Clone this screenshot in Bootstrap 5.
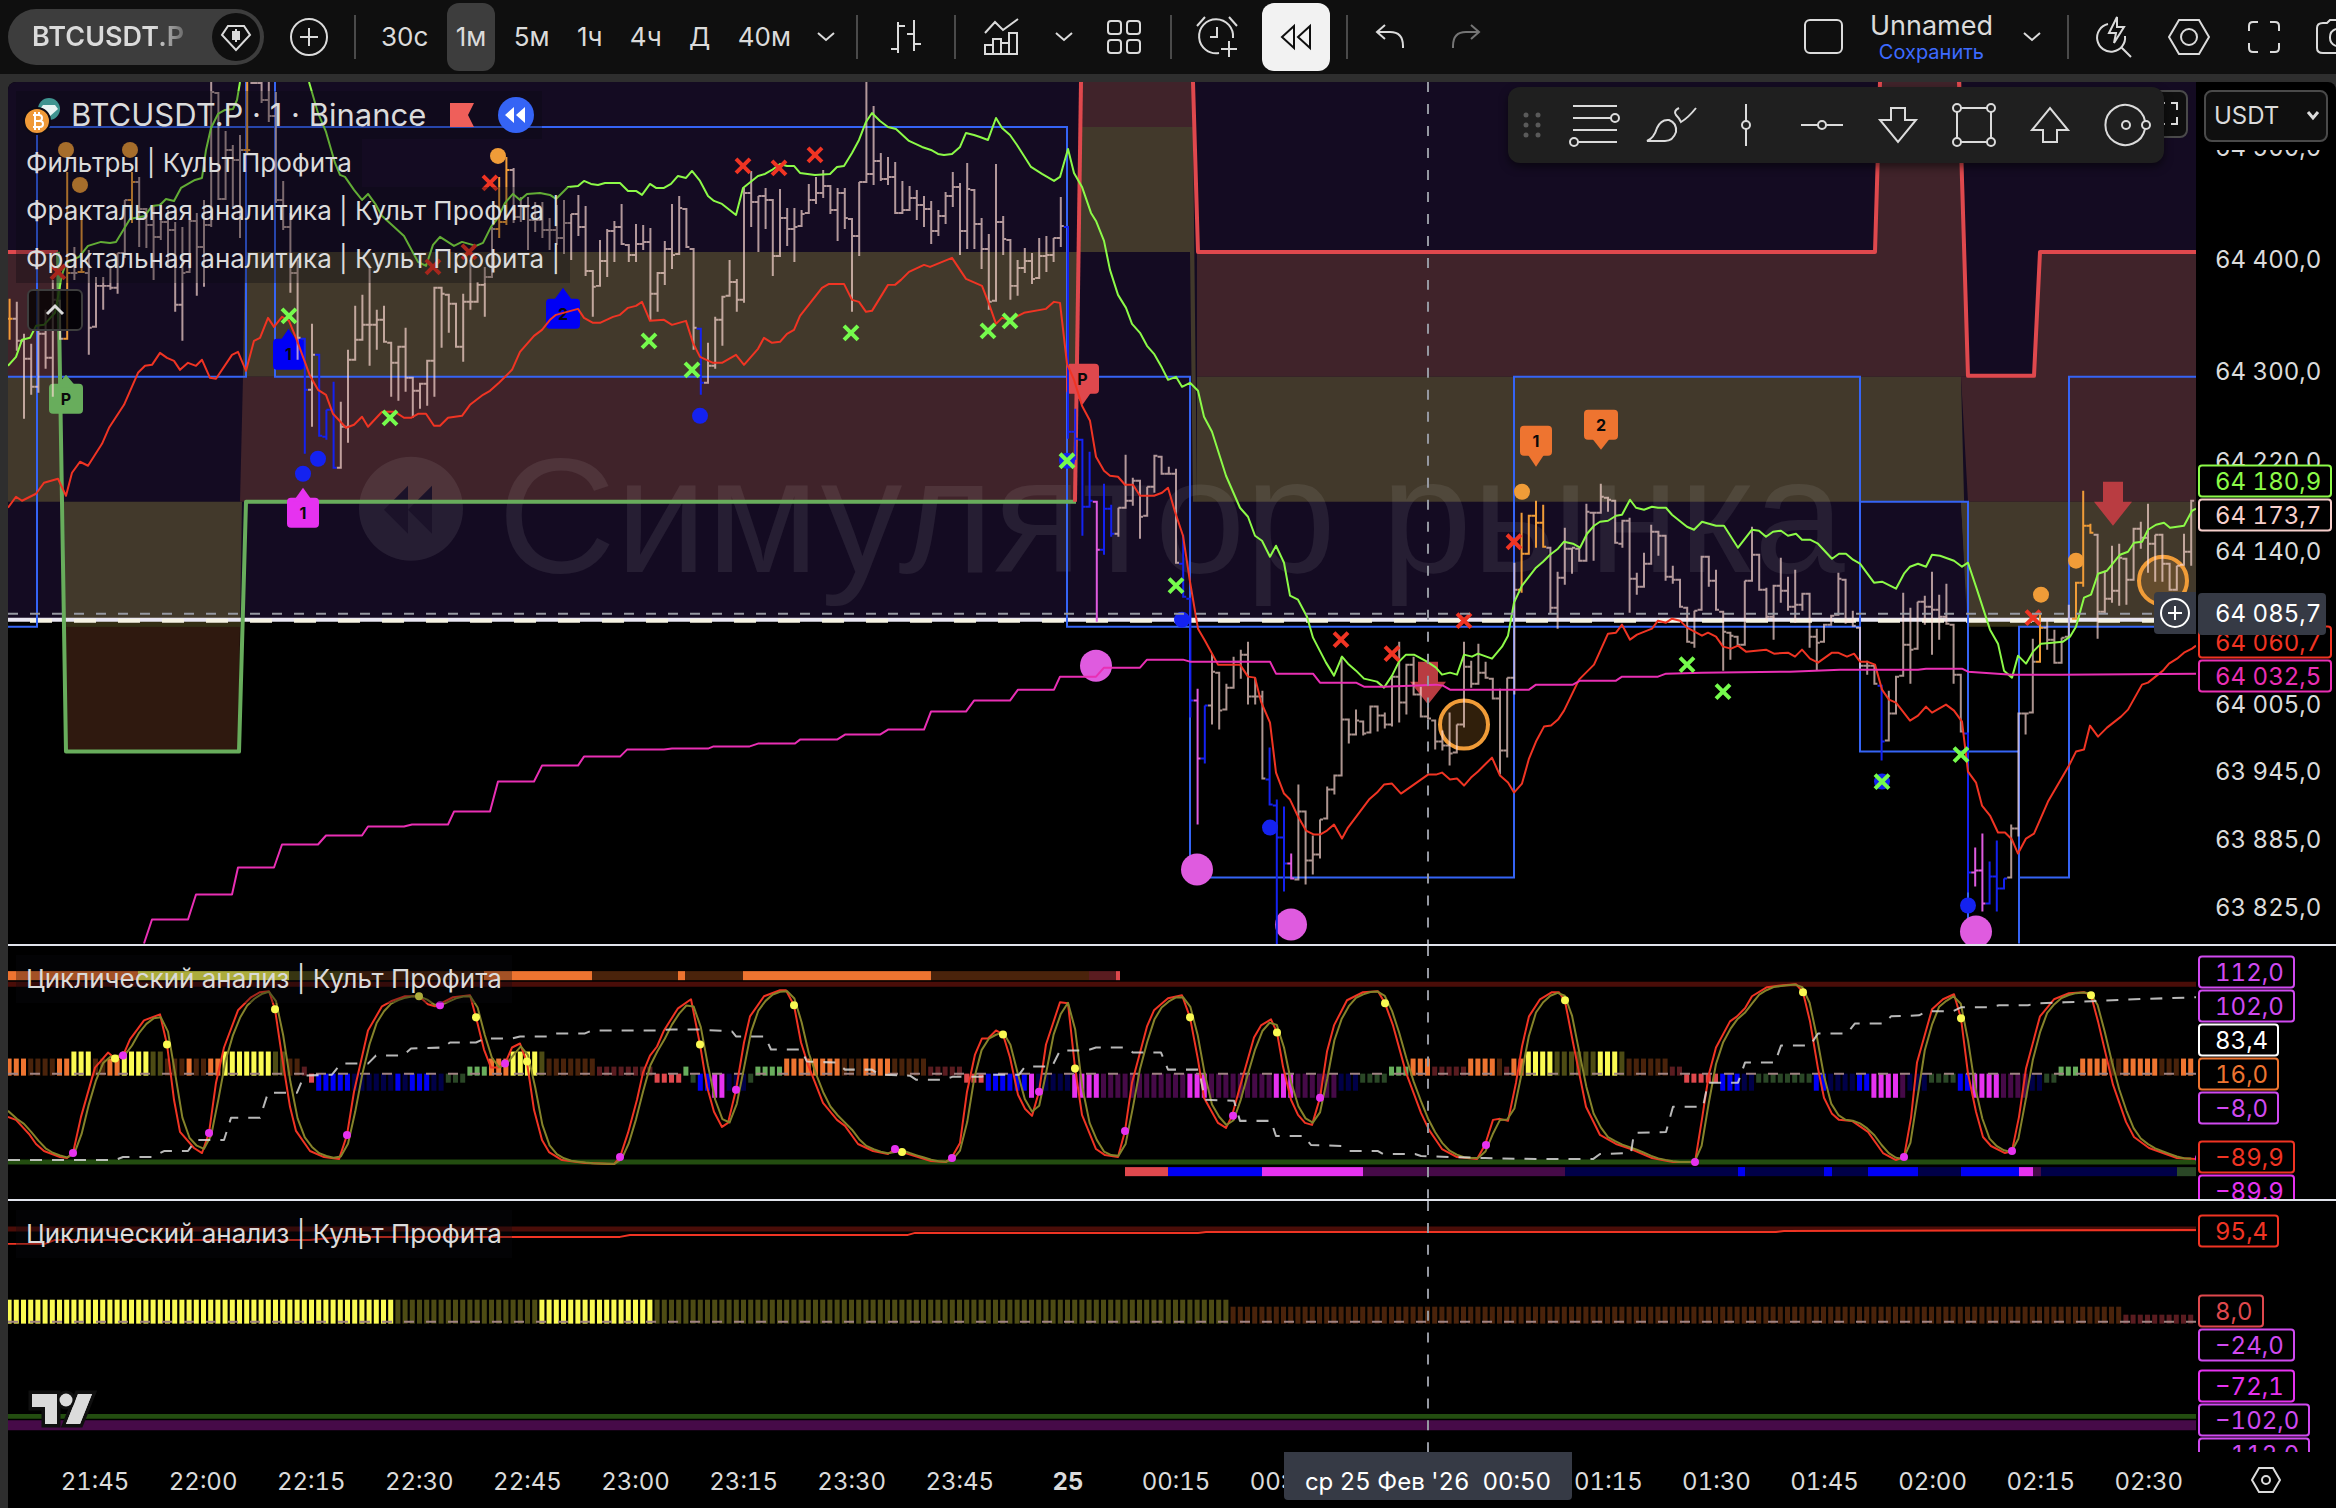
<!DOCTYPE html>
<html lang="ru" data-bs-theme="dark">
<head>
<meta charset="utf-8">
<meta name="viewport" content="width=device-width, initial-scale=1">
<title>BTCUSDT.P · 1 · Binance</title>
<link rel="stylesheet" href="https://cdn.jsdelivr.net/npm/bootstrap@5.3.0/dist/css/bootstrap.min.css">
<style>
body{font-family:Inter,"Noto Sans","Liberation Sans",sans-serif;background:#2e2e2e;color:#dbdbdb;font-size:24px;line-height:32px}
svg{display:block;flex:none}
.topbar{height:74px;background:#0f0f0f;padding-left:8px}
.ico{fill:none;stroke:#dbdbdb;stroke-width:2;overflow:visible}
.tbtn{border:0;background:transparent;color:#dbdbdb;height:68px;padding:0;display:flex;align-items:center;justify-content:center;border-radius:12px;flex:none}
.tbtn.on{background:#3d3d3d}
.tbtn.lit{background:#f2f2f2}
.tbtn.lit .ico{stroke:#0f0f0f}
.w36{width:36px}.w46{width:46px}.w52{width:52px}.w60{width:60px}.w68{width:68px}.w76{width:76px}.w84{width:84px}.w90{width:90px}.w96{width:96px}
.pill{width:256px;height:56px;background:#3d3d3d;border-radius:28px;padding:0 4px 0 24px;flex:none}
.pill-name{font-size:27px;background:linear-gradient(90deg,#dbdbdb 80%,#6a6a6a 100%);-webkit-background-clip:text;background-clip:text;color:transparent;border:0;padding:0}
.pill-badge{width:48px;height:48px;background:#0f0f0f}
.vsep{width:2px;height:44px;background:#4a4a4a;flex:none}
.frames{width:428px;font-size:26px}
.frames .tbtn{padding:0 9px}
.layout-name{font-size:27px;line-height:30px}
.layout-save{font-size:20px;line-height:22px;color:#3d6bff;text-decoration:none}
.workspace{padding:8px 0 0 8px;min-height:0}
.board{background:#000;border-radius:8px 8px 0 0;overflow:hidden}
.pane{border-bottom:2px solid #e0e3eb;min-height:0;flex:1 1 0}
.pane-main{flex-grow:865}.pane-osc{flex-grow:253}.pane-slow{flex-grow:252;border-bottom:0}
.plot{min-width:0;overflow:hidden}
.plot>svg{width:100%;height:100%;position:absolute;inset:0}
.scale{width:140px;overflow:hidden;flex:none}
.tag{position:absolute;left:2px;height:33px;line-height:29px;padding:0 9px 0 15px;border:2px solid transparent;border-radius:4px;transform:translateY(-50%);background:#000;white-space:nowrap;font-variant-numeric:tabular-nums}
.tag-plain{background:transparent}
.tag-cross{width:128px;height:42px;line-height:38px;background:#363a45;color:#fff}
.plus-tag{position:absolute;right:0;width:42px;height:42px;background:#363a45;border:0;border-radius:4px 0 0 4px;transform:translateY(-50%);padding:0}
.legend-box{position:absolute;left:8px;top:9px;font-size:26px}
.legend-box>div{height:48px;padding:0 10px;width:max-content;background:rgba(10,10,14,.32);display:flex;align-items:center;white-space:nowrap}
.legend-box .sym{font-size:31px;padding:0 8px 0 7px}
.fold{width:56px;height:42px;background:rgba(0,0,0,.75);border:2px solid #3d3d3d;border-radius:6px;margin:6px 0 0 11px;padding:0}
.tools{position:absolute;right:32px;top:5px;height:76px;width:656px;background:#1f1f1f;border-radius:12px;box-shadow:0 4px 8px rgba(0,0,0,.5);padding-left:12px}
.expand{position:absolute;right:8px;top:8px;width:60px;height:48px;background:#0f0f0f;border:2px solid #4a4a4a;border-radius:8px;padding:0 8px 0 0}
.money{position:absolute;left:8px;top:8px;width:124px;height:52px;z-index:2;background:#0f0f0f;box-shadow:0 0 0 8px #000;border-radius:8px}
.money select{appearance:none;width:100%;height:100%;background:transparent;border:2px solid #4a4a4a;border-radius:8px;color:#dbdbdb;font-size:24px;padding:0 8px}
.money svg{position:absolute;right:8px;top:20px;pointer-events:none}
.timebar{height:56px;flex:none;font-variant-numeric:tabular-nums}
.ticks{margin:0 -7px 0 33px}
.ticks span{flex:1 1 0;text-align:center;line-height:60px;min-width:0}
.cross-date{position:absolute;top:0;left:64.9%;transform:translateX(-50%);background:#363a45;color:#fff;width:288px;height:48px;line-height:60px;text-align:center;white-space:pre;border-radius:0 0 4px 4px;margin:0}
.mk{font:700 16px Inter,"Noto Sans",sans-serif;text-anchor:middle;fill:#0a0a0a}
.wm{font:400 163px "Liberation Sans",sans-serif;fill:#fff;fill-opacity:.08}
.tvlogo{position:absolute;left:20px;bottom:22px;width:70px;height:42px}
</style>
<script src="https://cdn.jsdelivr.net/npm/bootstrap@5.3.0/dist/js/bootstrap.bundle.min.js"></script>
</head>
<body class="vh-100 d-flex flex-column overflow-hidden m-0">
<header class="topbar d-flex align-items-center overflow-hidden">
  <div class="pill d-flex align-items-center justify-content-between">
    <button class="pill-name fw-semibold" type="button">BTCUSDT.P</button>
    <button class="pill-badge rounded-circle border-0 p-0 d-flex align-items-center justify-content-center" type="button" aria-label="Инструмент"><svg class="ico" width="34" height="34"><path d="M9 6H25L31 15L17 30L3 15Z M17 9V22"/><path fill="#dbdbdb" d="M14 12h6v7h-6z"/></svg></button>
  </div>
  <button class="tbtn w90" type="button" aria-label="Добавить"><svg class="ico" width="38" height="38"><circle cx="19" cy="19" r="18"/><path d="M19 10V28M10 19H28"/></svg></button>
  <span class="vsep me-3"></span>
  <div class="frames d-flex justify-content-between">
    <button class="tbtn" type="button">30с</button><button class="tbtn on" type="button">1м</button><button class="tbtn" type="button">5м</button><button class="tbtn" type="button">1ч</button><button class="tbtn" type="button">4ч</button><button class="tbtn" type="button">Д</button><button class="tbtn" type="button">40м</button>
  </div>
  <button class="tbtn w52" type="button" aria-label="Интервалы"><svg class="ico" width="18" height="10"><path d="M1 1L9 8L17 1"/></svg></button>
  <span class="vsep ms-1"></span>
  <button class="tbtn w96" type="button" aria-label="Тип графика"><svg class="ico" width="32" height="36"><path d="M8 3V34M8 7H15M1 30H8M24 1V32M17 15H24M24 25H31"/></svg></button>
  <span class="vsep"></span>
  <button class="tbtn w90" type="button" aria-label="Индикаторы"><svg class="ico" width="36" height="38"><path d="M2 15L12 4L20 12L35 1M2 36V27H10V36ZM10 36V21H18V36ZM18 36V25H26V36ZM26 36V15H34V36Z"/></svg></button>
  <button class="tbtn w36" type="button" aria-label="Избранные индикаторы"><svg class="ico" width="18" height="10"><path d="M1 1L9 8L17 1"/></svg></button>
  <button class="tbtn w84" type="button" aria-label="Шаблоны"><svg class="ico" width="34" height="34"><rect x="1" y="1" width="13" height="13" rx="3"/><rect x="20" y="1" width="13" height="13" rx="3"/><rect x="1" y="20" width="13" height="13" rx="3"/><rect x="20" y="20" width="13" height="13" rx="3"/></svg></button>
  <span class="vsep ms-1"></span>
  <button class="tbtn w90" type="button" aria-label="Оповещение"><svg class="ico" width="42" height="42"><path d="M23 37A17 17 0 1 1 37 22M21 11V21H14M1 10L9 1M33 1L41 10M33 25V41M25 33H41"/></svg></button>
  <button class="tbtn w68 lit" type="button" aria-label="Симулятор"><svg class="ico" width="34" height="28"><path d="M15 3V25L3 14ZM31 3V25L19 14Z"/></svg></button>
  <span class="vsep ms-3 me-1"></span>
  <button class="tbtn w76" type="button" aria-label="Отменить"><svg class="ico" width="30" height="26"><path d="M10 1L2 8L10 15M2 8H15Q28 8 28 22V24"/></svg></button>
  <button class="tbtn w76" type="button" aria-label="Вернуть"><svg class="ico" width="30" height="26" opacity=".5"><path d="M20 1L28 8L20 15M28 8H15Q2 8 2 22V24"/></svg></button>
  <div class="ms-auto d-flex align-items-center flex-shrink-0">
    <button class="tbtn w60" type="button" aria-label="Макет"><svg class="ico" width="40" height="36"><rect x="1" y="1" width="37" height="33" rx="5"/></svg></button>
    <div class="d-flex flex-column align-items-center px-3"><span class="layout-name">Unnamed</span><a class="layout-save" href="#">Сохранить</a></div>
    <button class="tbtn w46 me-1" type="button" aria-label="Макеты"><svg class="ico" width="18" height="10"><path d="M1 1L9 8L17 1"/></svg></button>
    <span class="vsep ms-2"></span>
    <button class="tbtn w90" type="button" aria-label="Быстрый поиск"><svg class="ico" width="38" height="42"><path d="M13 8A14 14 0 1 0 30 20M26 31L36 41M22 1L14 17H21L19 27L29 11H22Z"/></svg></button>
    <button class="tbtn w60" type="button" aria-label="Настройки"><svg class="ico" width="42" height="38"><path d="M11 2H31L41 19L31 36H11L1 19Z"/><circle cx="21" cy="19" r="8"/></svg></button>
    <button class="tbtn w90" type="button" aria-label="Полный экран"><svg class="ico" width="32" height="32"><path d="M1 10V5Q1 1 5 1H10M22 1H27Q31 1 31 5V10M31 22V27Q31 31 27 31H22M10 31H5Q1 31 1 27V22"/></svg></button>
    <button class="tbtn" type="button" aria-label="Снимок"><svg class="ico" width="27" height="38"><path d="M27 35H14Q8 35 8 30V10Q8 5 14 5H18L21 2H27"/><path d="M27 11A9 9 0 0 0 27 28"/></svg></button>
  </div>
</header>

<main class="workspace flex-grow-1 d-flex flex-column">
<div class="board flex-grow-1 d-flex flex-column">
  <section class="pane pane-main d-flex">
    <div class="plot position-relative flex-grow-1">
      <svg id="main" viewBox="8 82 2188 863" preserveAspectRatio="none"></svg>
      <div class="legend-box">
        <div class="sym"><svg width="40" height="40"><circle cx="26" cy="14" r="11" fill="#3f9490"/><path d="M20 10h12l3 4l-9 8l-9-8z" fill="#e8f4f3"/><circle cx="14" cy="26" r="13" fill="#f09a38" stroke="#0d0a16" stroke-width="2"/><path d="M10 20h6a3 3 0 0 1 0 6h-5h6a3 3 0 0 1 0 6h-7M12 20v12M12 17v3M16 17v3M12 32v3M16 32v3" fill="none" stroke="#fff" stroke-width="2"/></svg><span class="ms-2">BTCUSDT.P · 1 · Binance</span><svg class="ms-4" width="24" height="26"><path d="M0 1H24L18 13L24 25H0Z" fill="#ef5f5a"/></svg><svg class="ms-4" width="36" height="36"><circle cx="18" cy="18" r="18" fill="#3564f5"/><path d="M16 10V26L7 18ZM27 10V26L18 18Z" fill="#fff"/></svg></div>
        <div>Фильтры | Культ Профита</div>
        <div>Фрактальная аналитика | Культ Профита |</div>
        <div>Фрактальная аналитика | Культ Профита |</div>
        <button class="fold d-flex align-items-center justify-content-center" type="button" aria-label="Свернуть"><svg class="ico" width="18" height="12"><path stroke-width="3" d="M1 10L9 2L17 10"/></svg></button>
      </div>
      <button class="expand d-flex align-items-center justify-content-end" type="button" aria-label="Развернуть"><svg class="ico" width="20" height="24"><path d="M1 7V1H7M13 1H19V8M19 15V22H13M1 16V22H7"/></svg></button>
      <div class="tools d-flex align-items-center">
        <svg width="28" height="26" fill="#5a5a5a"><circle cx="6" cy="3" r="2.5"/><circle cx="18" cy="3" r="2.5"/><circle cx="6" cy="13" r="2.5"/><circle cx="18" cy="13" r="2.5"/><circle cx="6" cy="23" r="2.5"/><circle cx="18" cy="23" r="2.5"/></svg>
        <button class="tbtn w76 ms-2" type="button" aria-label="Фибоначчи"><svg class="ico" width="54" height="44"><path d="M6 3H50M6 15H44M6 27H50M11 39H50"/><circle cx="48" cy="15" r="4"/><circle cx="7" cy="39" r="4"/></svg></button>
        <button class="tbtn w76" type="button" aria-label="Кисть"><svg class="ico" width="50" height="38"><path d="M2 35Q9 32 12 22Q16 13 24 14Q32 17 31 26Q28 35 20 35ZM34 2Q28 5 31 9Q34 12 36 16Q43 12 51 2"/></svg></button>
        <button class="tbtn w76" type="button" aria-label="Вертикальная линия"><svg class="ico" width="12" height="42"><path d="M6 0V17M6 25V42"/><circle cx="6" cy="21" r="4"/></svg></button>
        <button class="tbtn w76" type="button" aria-label="Горизонтальная линия"><svg class="ico" width="42" height="12"><path d="M0 6H17M25 6H42"/><circle cx="21" cy="6" r="4"/></svg></button>
        <button class="tbtn w76" type="button" aria-label="Стрелка вниз"><svg class="ico" width="40" height="38"><path d="M13 2H27V14H38L20 36L2 14H13Z"/></svg></button>
        <button class="tbtn w76" type="button" aria-label="Прямоугольник"><svg class="ico" width="46" height="44"><path d="M10 5H36M10 39H36M6 9V35M40 9V35"/><circle cx="6" cy="5" r="4"/><circle cx="40" cy="5" r="4"/><circle cx="6" cy="39" r="4"/><circle cx="40" cy="39" r="4"/></svg></button>
        <button class="tbtn w76" type="button" aria-label="Стрелка вверх"><svg class="ico" width="40" height="38"><path d="M13 36H27V24H38L20 2L2 24H13Z"/></svg></button>
        <button class="tbtn w76" type="button" aria-label="Окружность"><svg class="ico" width="44" height="44"><path d="M41 18A20 20 0 1 0 41 26"/><circle cx="22" cy="22" r="4"/><circle cx="42" cy="22" r="4"/></svg></button>
      </div>
      <button class="plus-tag d-flex align-items-center justify-content-center" style="top:61.6%" type="button" aria-label="Действия на цене"><svg class="ico" width="30" height="30" style="stroke:#fff"><circle cx="15" cy="15" r="14"/><path d="M15 8V22M8 15H22"/></svg></button>
    </div>
    <div class="scale position-relative" id="scale1"><label class="money" aria-label="Валюта"><select><option>USDT</option></select><svg class="ico" width="14" height="12"><path stroke-width="3" d="M2 2L7 8L12 2"/></svg></label></div>
  </section>
  <section class="pane pane-osc d-flex">
    <div class="plot position-relative flex-grow-1"><svg id="osc" viewBox="8 947 2188 251" preserveAspectRatio="none"></svg>
      <div class="legend-box"><div>Циклический анализ | Культ Профита</div></div></div>
    <div class="scale position-relative" id="scale2"></div>
  </section>
  <section class="pane pane-slow d-flex">
    <div class="plot position-relative flex-grow-1"><svg id="slow" viewBox="8 1200 2188 252" preserveAspectRatio="none"></svg>
      <div class="legend-box"><div>Циклический анализ | Культ Профита</div></div>
      <div class="tvlogo"><svg width="70" height="42"><path d="M4 6H29V36H17V19H4ZM50 6H64L52 36H38Z" fill="#dbdbdb" stroke="#0f0f0f" stroke-width="7" paint-order="stroke"/><circle cx="38" cy="12" r="6.500" fill="#dbdbdb" stroke="#0f0f0f" stroke-width="6" paint-order="stroke"/><path d="M4 6H29V36H17V19H4ZM50 6H64L52 36H38Z" fill="#dbdbdb"/></svg></div>
    </div>
    <div class="scale position-relative" id="scale3"></div>
  </section>
  <section class="timebar d-flex">
    <div class="position-relative flex-grow-1">
      <div class="ticks d-flex"><span>21:45</span><span>22:00</span><span>22:15</span><span>22:30</span><span>22:45</span><span>23:00</span><span>23:15</span><span>23:30</span><span>23:45</span><span class="fw-bold">25</span><span>00:15</span><span>00:30</span><span>00:45</span><span>01:00</span><span>01:15</span><span>01:30</span><span>01:45</span><span>02:00</span><span>02:15</span><span>02:30</span></div>
      <p class="cross-date">ср 25 Фев '26  00:50</p>
    </div>
    <button class="tbtn scale h-100" type="button" aria-label="Настройки шкалы"><svg class="ico" width="30" height="28"><path d="M8 2H22L29 14L22 26H8L1 14Z"/><circle cx="15" cy="14" r="4"/></svg></button>
  </section>
</div>
</main>

<script>
const NS = 'http://www.w3.org/2000/svg';
const X0 = 1428, STEP = 7.2, FIRST = -197;
const bx = i => X0 + STEP * i;
function el(host, name, attrs, text) {
  const e = document.createElementNS(NS, name);
  for (const k in attrs) e.setAttribute(k, attrs[k]);
  if (text) e.textContent = text;
  host.appendChild(e);
  return e;
}
const parse = s => s.trim().split(/\s+/).map(p => p.split(',').map(Number));
const line = (host, pts, color, w, extra) =>
  el(host, 'polyline', Object.assign({ points: pts.map(p => p.join(',')).join(' '), fill: 'none', stroke: color, 'stroke-width': w, 'stroke-linejoin': 'round' }, extra));
const poly = (host, pts, color) => el(host, 'polygon', { points: pts, fill: color });
const path = (host, d, color, w, extra) => el(host, 'path', Object.assign({ d, fill: 'none', stroke: color, 'stroke-width': w }, extra));
const dot = (host, x, y, r, color) => el(host, 'circle', { cx: x, cy: y, r, fill: color });

/* ---------- price pane ---------- */
const main = document.getElementById('main');
const PUR = '#140b22', OLV = '#42392b', MAR = '#40232a', BRN = '#2f190f';
poly(main, '8,82 2196,82 2196,621 8,621', PUR);
poly(main, '8,252 59,252 61,377 8,377', MAR);
poly(main, '8,377 61,377 63,502 8,502', OLV);
poly(main, '64,502 242,502 240,627 65,627', OLV);
poly(main, '65,627 240,627 238,752 66,752', BRN);
poly(main, '245,252 1077,252 1077,377 243,377', OLV);
poly(main, '243,377 1077,377 1075,502 246,502 240,502', MAR);
poly(main, '1081,82 1193,82 1193,127 1081,127', MAR);
poly(main, '1081,127 1193,127 1197,502 1193,502 1190,252 1079,252', OLV);
poly(main, '1197,252 1875,252 1881,82 1962,82 1968,377 1197,377', MAR);
poly(main, '1197,377 1961,377 1967,620 1961,502 1197,502', OLV);
poly(main, '1961,377 2034,377 2040,252 2196,252 2196,502 1968,502', MAR);
poly(main, '1961,502 2196,502 2196,621 1968,621', OLV);
poly(main, '65,621 240,621 240,627 65,627', '#332e14');
poly(main, '1968,621 2196,621 2196,627 1968,627', '#332e14');

el(main, 'circle', { cx: 411, cy: 509, r: 52, fill: '#fff', 'fill-opacity': .08 });
poly(main, '408,486 408,534 384,510', '#1b1229');
poly(main, '432,486 432,534 408,510', '#1b1229');
el(main, 'text', { x: 498, y: 572, class: 'wm' }, 'Симулятор рынка');

path(main, 'M8 620H2196', '#e9e6f2', 4);
path(main, 'M30 621H2196', '#f5f2e2', 4, { 'stroke-dasharray': '22 22' });
path(main, 'M8 627H37V127H1067V627H1860M8 377H246V82M275 82V377H1190V878H1514V377H1860V752H2019M1860 502H1968V944M2019 944V627H2196M2019 878H2069V377H2196', '#3564f5', 2);

line(main, parse('8,252 58,252'), '#df484d', 4);
line(main, parse('58,252 66,752 239,752 246,502 1076,502'), '#68ad5c', 4);
line(main, parse('1075,502 1081,82'), '#df484d', 4);
line(main, parse('1193,82 1198,252 1875,252 1880,82'), '#df484d', 4);
line(main, parse('1959,82 1968,376 2034,376 2040,252 2196,252'), '#df484d', 4);

const tag = (x, y, w, h, tip, color, t) => {
  const b = y + h, base = tip < y ? y + 4 : b - 4;
  el(main, 'rect', { x, y, width: w, height: h, rx: 4, fill: color });
  poly(main, `${x + 6},${base} ${x + w / 2},${tip} ${x + w - 6},${base}`, color);
  el(main, 'text', { x: x + w / 2, y: y + h / 2 + 6, class: 'mk' }, t);
};
tag(49, 384, 34, 30, 375, '#68ad5c', 'P');
tag(273, 339, 31, 31, 329, '#0000f5', '1');
tag(546, 299, 34, 30, 288, '#0000f5', '2');
tag(287, 498, 32, 30, 488, '#e632f0', '1');
tag(1066, 364, 33, 30, 405, '#df484d', 'P');
tag(1520, 426, 32, 30, 467, '#ee7430', '1');
tag(1584, 410, 34, 30, 450, '#ee7430', '2');
for (const [x, y] of [[1464, 725], [2163, 581]])
  el(main, 'circle', { cx: x, cy: y, r: 24, fill: '#f09c38', 'fill-opacity': .2, stroke: '#f09c38', 'stroke-width': 4 });
poly(main, '1418,662 1438,662 1438,682 1446,682 1428,705 1410,682 1418,682', '#b93c41');
poly(main, '2103,482 2123,482 2123,502 2132,502 2113,526 2094,502 2103,502', '#b93c41');
for (const [x, y] of [[1096, 666], [1197, 870], [1291, 925], [1976, 932]]) dot(main, x, y, 16, '#df5bdf');
for (const [x, y] of [[66, 150], [130, 150], [80, 185], [498, 156], [1522, 492], [2041, 595], [2076, 561]]) dot(main, x, y, 8, '#f09c38');
for (const [x, y] of [[303, 474], [318, 459], [700, 416], [1067, 461], [1182, 620], [1270, 828], [1882, 782], [1968, 906]]) dot(main, x, y, 8, '#1422f0');

/* high, low, close for every minute; the letter picks the bar colour */
const bars = `
o299,340,319 302,351,341 334,419,359 344,395,387 290,393,334 310,369,358 280,397,300 300,340,339 o172,340,273 247,280,273
o206,273,273 250,355,328 277,328,286 277,310,286 267,290,288 253,294,253 200,258,200 o172,223,182 177,247,209 208,248,225
206,280,237 203,240,222 210,267,230 222,312,305 227,341,273 218,273,221 213,296,247 200,287,225 82,227,92 92,200,199
131,200,150 145,207,160 135,238,150 o82,153,150 82,84,83 82,103,100 82,122,116 92,203,200 181,230,227 213,293,273
260,360,338 b338,454,390 324,427,355 b354,437,437 b410,440,410 b382,469,468 402,469,427 350,443,360 306,361,340 295,341,325
267,366,325 310,350,320 306,343,343 342,397,363 346,401,347 328,392,378 377,418,391 383,409,384 360,406,361 287,397,288
287,348,294 294,333,304 303,348,347 294,362,302 260,310,302 282,303,285 267,317,277 227,278,229 o177,238,222 o157,225,170
168,223,217 197,222,207 197,250,220 202,232,220 202,238,230 218,250,230 205,245,238 200,254,223 214,260,214 195,236,227
206,276,271 270,317,287 240,287,261 229,277,231 221,262,227 204,245,245 244,262,255 224,262,244 225,250,242 228,321,294
272,312,273 241,285,249 204,269,255 196,255,208 208,248,248 248,350,328 b328,395,383 343,384,366 317,369,320 296,346,297
260,297,282 279,312,300 188,303,193 171,227,202 196,252,196 188,229,200 199,276,256 189,257,218 208,246,229 208,262,227
210,227,214 184,214,200 177,204,193 170,198,186 185,214,210 188,241,193 188,229,218 218,312,236 182,256,182 82,183,174
106,185,161 153,181,179 157,185,177 162,214,214 181,214,210 186,211,198 190,220,205 196,227,209 201,244,231 210,236,216
192,224,196 172,207,187 183,255,231 163,249,189 189,249,224 218,269,249 234,310,302 164,302,222 216,255,239 239,300,286
260,296,268 248,273,261 253,284,279 238,279,256 236,272,255 238,262,238 197,247,226 b226,439,432 b409,460,439 b439,536,507
b452,508,501 m501,622,550 b484,555,509 b505,537,534 508,537,508 455,509,501 478,506,481 480,539,517 487,517,487 455,493,456
456,475,475 467,475,474 469,564,564 b535,598,598 b598,718,701 m689,825,759 b706,764,706 654,725,672 672,730,711 684,711,688
657,689,662 650,679,655 642,705,697 678,705,697 691,780,780 b748,806,806 b800,945,838 b807,892,864 m854,880,880 785,881,812
811,885,861 836,875,855 820,859,820 787,820,790 775,795,776 657,777,720 719,744,735 710,736,721 721,736,734 706,734,707
706,732,716 713,729,725 676,727,677 642,723,703 664,715,665 657,696,695 687,718,717 702,720,720 720,750,742 731,751,746
713,766,754 725,754,725 642,728,667 661,688,684 644,685,673 662,679,678 678,700,699 689,775,751 678,758,678 563,695,590
o513,593,554 o515,555,516 o501,548,523 o505,548,547 547,614,608 572,629,578 528,585,549 548,574,548 548,562,561 504,562,512
512,561,513 484,514,497 497,512,500 500,544,544 520,548,521 518,613,579 573,595,587 553,588,564 525,565,532 531,556,536
535,581,577 566,584,580 579,608,607 607,643,643 611,648,611 556,611,557 556,587,581 570,611,611 611,671,632 632,660,636
636,646,645 581,646,581 527,582,555 554,591,590 588,621,617 585,640,586 558,603,591 577,611,607 570,623,605 593,611,594
593,648,637 629,671,643 624,643,625 615,626,616 573,616,579 579,624,622 611,627,627 627,669,666 661,675,666 665,685,685
b685,761,742 691,742,714 676,715,677 593,677,645 608,684,650 602,650,602 596,625,607 572,655,610 595,640,617 584,625,624
624,684,675 674,733,733 b733,893,873 m848,887,871 m834,912,904 b862,905,877 b841,912,889 b879,890,879 825,879,829 713,837,714
713,735,714 639,714,662 o614,663,628 620,650,640 630,664,663 638,664,638 605,638,619 o582,620,583 o491,587,526 o524,534,534
534,639,612 571,614,599 546,603,591 544,606,558 558,605,580 528,581,529 522,549,538 504,573,544 535,582,535 534,582,564
563,591,591 566,591,566 534,566,552 500,566,501`.trim().split(/\s+/);
const barColor = { p: '#ffdcd4', o: '#f09c38', b: '#1422f0', m: '#df5bdf' };
const strokes = { p: '', o: '', b: '', m: '' };
let prev = 319;
bars.forEach((s, n) => {
  const kind = /[a-z]/.test(s[0]) ? s[0] : 'p';
  const [h, l, c] = s.replace(/^[a-z]/, '').split(',').map(Number);
  const x = bx(FIRST + n), o = Math.min(Math.max(prev, h + 1), l - 1);
  strokes[kind] += `M${x.toFixed(1)} ${h}V${l}M${(x - 4).toFixed(1)} ${o}h4M${x.toFixed(1)} ${Math.min(c, l - 1)}h3`;
  prev = c;
});
for (const k in strokes) path(main, strokes[k], barColor[k], 2, { 'stroke-opacity': k === 'p' ? .68 : 1 });

line(main, parse('8,366 16,357 22,340 30,338 36,326 44,325 55,313 62,275 66,263 79,257 88,246 101,242 110,243 116,242 130,219 145,216 152,206 160,205 166,199 174,201 181,188 195,180 202,178 206,150 211,128 218,114 225,110 233,109 237,100 240,82'), '#8cfa48', 2);
line(main, parse('309,82 318,113 326,132 335,163 340,175 345,177 354,190 362,200 368,194 376,205 382,216 392,225 404,236 418,262 426,266 433,245 440,237 454,246 462,242 476,246 483,243 491,227 498,218 505,203 513,194 520,200 527,194 540,193 550,195 556,199 564,191 568,187 578,186 584,181 591,184 598,185 605,183 620,183 628,191 636,191 642,195 650,184 656,188 664,188 671,184 678,176 686,178 692,171 700,181 708,196 714,201 722,204 736,215 743,188 758,176 765,174 772,170 780,164 787,166 794,166 800,173 815,175 830,174 837,167 844,166 852,153 859,140 866,122 872,113 880,121 888,127 896,129 909,141 922,147 931,150 938,154 944,155 952,154 960,147 966,133 974,135 980,137 988,140 996,118 1002,128 1010,135 1017,145 1024,156 1031,167 1042,174 1054,181 1060,177 1068,149 1074,173 1082,187 1091,213 1096,221 1104,241 1110,270 1118,295 1126,308 1132,324 1140,333 1147,346 1154,354 1162,368 1168,380 1176,377 1182,387 1190,383 1198,391 1204,417 1212,432 1219,454 1226,476 1240,508 1248,517 1255,536 1262,541 1270,557 1276,546 1284,563 1290,596 1298,600 1307,617 1313,638 1326,663 1334,676 1342,657 1348,664 1356,671 1364,679 1377,682 1384,688 1392,676 1399,662 1406,655 1414,655 1427,662 1436,668 1442,675 1450,673 1457,675 1464,655 1472,657 1478,654 1492,659 1502,647 1508,636 1514,603 1522,586 1536,568 1543,562 1550,555 1558,549 1564,542 1573,544 1580,548 1587,534 1594,526 1600,522 1608,521 1616,516 1622,515 1630,500 1636,508 1644,510 1652,507 1658,508 1666,508 1672,515 1687,527 1694,530 1702,522 1716,526 1724,526 1738,548 1752,530 1759,531 1766,537 1773,532 1781,531 1788,536 1796,534 1802,540 1810,540 1818,544 1832,559 1839,554 1846,554 1853,560 1860,564 1874,583 1882,582 1896,589 1904,574 1910,567 1918,564 1926,567 1932,555 1940,556 1954,561 1962,567 1968,563 1977,590 1990,630 1998,644 2004,671 2012,678 2018,656 2026,664 2033,652 2041,644 2063,642 2070,637 2076,627 2084,598 2091,595 2098,574 2107,571 2120,555 2128,552 2134,543 2142,542 2148,530 2156,525 2164,523 2170,528 2184,526 2192,511 2196,509'), '#8cfa48', 2);
line(main, parse('8,508 16,497 22,501 36,494 44,483 58,479 66,496 72,473 80,462 88,466 102,444 109,428 124,405 138,373 145,366 152,365 160,353 167,358 174,361 180,370 188,363 196,366 202,360 210,378 216,379 232,355 238,352 246,371 254,341 260,338 268,318 274,327 282,317 289,321 296,338 310,376 318,390 326,395 333,414 346,428 354,425 362,417 368,427 382,412 395,412 404,418 411,418 418,414 426,414 434,426 440,426 448,418 462,416 470,405 483,395 490,391 499,383 512,370 520,352 534,336 542,330 550,320 556,315 578,309 584,318 593,323 600,323 613,317 620,315 628,308 636,306 642,302 650,321 664,320 672,325 686,321 693,343 700,357 713,363 722,363 736,355 744,365 758,349 764,338 772,343 780,342 787,334 794,330 800,316 822,288 829,284 844,284 852,300 859,302 866,312 872,311 888,285 895,285 901,280 909,272 924,265 930,267 952,258 966,279 982,286 989,304 996,324 1002,318 1010,320 1024,313 1046,309 1054,302 1060,303 1067,364 1074,380 1082,406 1090,421 1096,457 1104,471 1110,476 1118,477 1125,485 1133,485 1140,496 1154,496 1162,493 1168,488 1175,512 1183,536 1190,582 1198,629 1205,641 1218,665 1240,665 1248,677 1255,678 1261,702 1270,723 1276,773 1284,794 1290,800 1298,817 1306,831 1314,835 1320,835 1327,831 1334,825 1342,839 1348,828 1369,800 1377,793 1384,785 1392,784 1401,794 1428,775 1436,775 1442,773 1450,780 1457,779 1464,786 1471,778 1478,772 1486,764 1492,758 1500,776 1508,783 1514,793 1522,784 1529,759 1536,742 1544,727 1551,726 1558,720 1564,711 1579,680 1594,665 1608,634 1616,633 1622,625 1630,640 1637,635 1652,629 1658,621 1666,623 1672,619 1680,621 1687,628 1702,636 1708,633 1716,637 1723,647 1731,649 1738,646 1746,652 1766,650 1774,654 1788,653 1795,657 1802,650 1810,659 1818,663 1832,653 1838,653 1847,657 1854,654 1860,662 1867,662 1875,665 1882,690 1889,700 1896,703 1910,721 1918,716 1926,707 1932,713 1946,705 1954,711 1962,722 1968,772 1976,783 1982,806 1990,816 1998,833 2005,833 2012,840 2018,854 2026,839 2034,834 2048,802 2062,778 2069,766 2076,752 2084,750 2090,726 2098,737 2107,728 2121,717 2128,710 2142,685 2148,683 2163,671 2169,664 2177,659 2184,653 2192,649 2196,646'), '#f03423', 2);
line(main, parse('144,944 152,920 188,920 196,895 232,895 238,868 274,868 282,845 318,845 326,836 362,836 368,827 404,827 412,825 448,825 454,812 490,812 498,782 534,782 542,766 578,766 584,757 620,757 627,750 664,750 672,749 708,749 713,747 749,747 758,744 795,744 800,740 837,740 845,735 880,735 888,730 924,730 931,712 966,712 974,701 1010,701 1018,690 1054,690 1060,677 1096,677 1104,668 1140,668 1147,660 1183,660 1190,662 1270,662 1276,674 1313,674 1320,683 1356,683 1364,687 1384,687 1436,685 1443,686 1450,690 1529,690 1536,685 1573,685 1580,681 1616,681 1622,677 1658,677 1666,674 1702,673 1790,672 1840,670 1918,670 1926,669 1962,669 1968,672 2012,675 2060,675 2196,674'), '#e92fb4', 2);

const cross = (x, y, color) => path(main, `M${x - 7} ${y - 7}l14 14m0 -14l-14 14`, color, 4);
for (const [x, y] of [[490, 183], [743, 166], [779, 168], [815, 155], [58, 272], [433, 267], [469, 252], [1341, 640], [1392, 654], [1464, 621], [1514, 542], [2033, 618]]) cross(x, y, '#f03423');
for (const [x, y] of [[289, 316], [390, 418], [649, 341], [692, 370], [851, 333], [988, 331], [1010, 321], [1067, 461], [1176, 586], [1687, 665], [1723, 692], [1882, 782], [1961, 755]]) cross(x, y, '#75fb4c');
path(main, 'M8 614H2196', '#9598a1', 2, { 'stroke-dasharray': '10 12' });

/* ---------- histograms ---------- */
const cell = {
  g: ['#68ad5c', -8], r: ['#5a1c20', -8], o: ['#ee7430', -16], O: ['#4a230b', -16], y: ['#fafa52', -24], Y: ['#4d4b14', -24],
  R: ['#df484d', 8], G: ['#2a4726', 8], b: ['#0000f5', 16], B: ['#000048', 16], m: ['#e632f0', 24], M: ['#460a48', 24]
};
const reach = { 8: 8, 16: 16, 24: 23 };
function histogram(host, rle, zero) {
  let i = FIRST;
  for (const [, k, n] of rle.matchAll(/([a-zA-Z])(\d+)/g)) {
    for (let j = 0; j < n; j++, i++) {
      const [color, v] = cell[k], h = reach[Math.abs(v)];
      el(host, 'rect', { x: (bx(i) - 3).toFixed(1), width: 5, y: v < 0 ? zero - h : zero - 1, height: h + 1, fill: color });
    }
  }
}
const osc = document.getElementById('osc');
for (const [a, b, c] of [[8, 138, '#ee7430'], [138, 289, '#fafa52'], [289, 347, '#4d4b14'], [347, 484, '#4a230b'], [484, 592, '#ee7430'], [592, 678, '#4a230b'], [678, 685, '#ee7430'], [685, 743, '#4a230b'], [743, 931, '#ee7430'], [931, 1089, '#4a230b'], [1089, 1116, '#5a1c20'], [1116, 1120, '#df484d']])
  el(osc, 'rect', { x: a, width: b - a, y: 972, height: 9, fill: c });
for (const [a, b, c] of [[1125, 1168, '#df484d'], [1168, 1262, '#0000f5'], [1262, 1363, '#e632f0'], [1363, 1565, '#460a48'], [1565, 2177, '#000048'], [1738, 1745, '#0000f5'], [1824, 1832, '#0000f5'], [1868, 1918, '#0000f5'], [1961, 2019, '#0000f5'], [2019, 2033, '#e632f0'], [2033, 2041, '#460a48'], [2177, 2196, '#2a4726']])
  el(osc, 'rect', { x: a, width: b - a, y: 1167, height: 9, fill: c });
path(osc, 'M8 985H2196', '#4a0d08', 5);
path(osc, 'M8 1162H2196', '#234d10', 5);
histogram(osc, 'o3O4o2y3O2o2y4Y2O3o1O2o2y7Y2O2r1R1b5B6b1B1b3B2G3g3o3y4Y1O7r8R4g1G1b2m2B3G1g4o8O3o4O5r5R3b6m1B5m4M12m3M9m3M6B3G4g3o3r5o4O1r1o2y4Y6y3Y1O6r2R5b3B2G8b2B4b2m4M1B3G4b2m4M4B2G2g3o4O2o5O3o2', 1075);
path(osc, 'M8 1074H2196', '#a08282', 2, { 'stroke-dasharray': '10 12' });

const red = parse('8,1117 16,1120 29,1134 36,1144 44,1151 60,1157 67,1158 73,1153 81,1117 95,1068 108,1053 115,1059 123,1056 130,1040 144,1021 160,1015 167,1045 174,1100 180,1132 194,1148 202,1153 209,1133 216,1083 224,1048 238,1011 251,998 260,993 269,992 275,1010 282,1057 290,1107 296,1131 310,1151 324,1157 339,1159 347,1135 354,1092 368,1031 382,1007 391,1002 405,997 419,997 428,1005 435,1007 453,998 470,996 476,1018 484,1050 491,1068 498,1068 505,1064 512,1048 520,1044 527,1063 534,1110 542,1140 549,1152 562,1160 585,1163 614,1164 620,1157 628,1133 637,1100 643,1073 650,1056 657,1047 664,1031 678,1009 691,1000 700,1045 707,1087 714,1112 722,1127 728,1123 736,1090 744,1043 750,1017 764,997 780,991 786,991 794,1006 801,1043 808,1065 823,1103 837,1120 845,1126 858,1144 873,1151 888,1154 895,1149 902,1152 931,1161 946,1162 952,1157 960,1143 967,1092 975,1055 982,1039 988,1039 996,1031 1003,1035 1010,1058 1018,1095 1025,1109 1032,1116 1039,1092 1046,1045 1060,1003 1068,1004 1075,1068 1082,1115 1096,1149 1105,1155 1118,1157 1125,1131 1132,1083 1147,1027 1154,1011 1168,999 1182,996 1190,1018 1198,1060 1204,1098 1218,1123 1226,1128 1232,1116 1240,1087 1254,1038 1261,1026 1271,1020 1277,1033 1283,1067 1291,1100 1298,1115 1305,1123 1312,1125 1320,1098 1327,1052 1334,1026 1347,1001 1363,993 1378,992 1385,1004 1393,1026 1406,1073 1421,1113 1429,1130 1442,1149 1457,1157 1477,1159 1485,1145 1493,1120 1500,1119 1508,1121 1516,1083 1522,1047 1529,1017 1540,1000 1552,993 1559,993 1565,1002 1573,1043 1586,1107 1600,1135 1616,1144 1631,1149 1652,1158 1673,1162 1695,1162 1702,1119 1709,1074 1716,1048 1730,1022 1737,1017 1745,1009 1752,997 1767,988 1783,986 1796,985 1803,993 1810,1022 1818,1069 1824,1098 1832,1114 1839,1120 1852,1121 1868,1132 1883,1153 1896,1160 1904,1157 1911,1118 1917,1063 1932,1010 1943,1000 1954,995 1961,1019 1968,1074 1976,1112 1983,1137 1991,1146 2005,1153 2012,1151 2019,1117 2026,1069 2040,1017 2054,1000 2069,994 2084,993 2091,996 2098,1022 2113,1085 2126,1122 2134,1137 2149,1148 2177,1158 2196,1159');
line(osc, red, '#f03423', 2);
/* signal line: two-bar average of the fast line */
const at = x => {
  const k = red.findIndex(p => p[0] >= x);
  if (k < 1) return k < 0 ? red[red.length - 1][1] : red[0][1] - 5;
  const [a, b] = [red[k - 1], red[k]];
  return a[1] + (b[1] - a[1]) * (x - a[0]) / (b[0] - a[0]);
};
const slowLine = [[8, 1111]];
for (let i = -196; i <= 106; i++) slowLine.push([bx(i).toFixed(1), (at(bx(i)) * .4 + at(bx(i - 1)) * .6).toFixed(1)]);
line(osc, slowLine, '#85832a', 2);
line(osc, parse('8,1160 115,1160 123,1157 153,1157 164,1151 188,1151 196,1140 224,1140 231,1118 260,1118 268,1093 297,1093 304,1076 332,1075 341,1064 368,1064 376,1056 403,1056 411,1049 443,1048 450,1043 476,1043 485,1039 512,1039 520,1037 548,1037 557,1034 585,1034 592,1031 657,1031 672,1030 697,1030 732,1032 736,1037 765,1037 771,1050 801,1050 807,1062 837,1063 845,1070 872,1070 879,1075 910,1076 916,1080 944,1080 953,1077 982,1077 990,1075 1019,1075 1025,1067 1052,1067 1060,1051 1087,1051 1096,1048 1125,1048 1133,1053 1161,1053 1168,1070 1199,1070 1205,1100 1234,1101 1240,1121 1271,1121 1276,1136 1304,1136 1311,1145 1342,1146 1349,1151 1378,1151 1383,1154 1415,1154 1421,1156 1485,1158 1536,1159 1593,1159 1600,1154 1631,1153 1634,1133 1666,1132 1673,1107 1703,1107 1708,1083 1738,1083 1745,1063 1775,1063 1781,1046 1810,1046 1818,1034 1847,1034 1855,1024 1884,1024 1891,1017 1919,1016 1927,1012 1953,1012 1961,1008 1990,1008 1999,1006 2028,1006 2036,1004 2065,1003 2092,1002 2134,1000 2166,999 2196,998'), '#d8d8d8', 2, { 'stroke-dasharray': '12 10', 'stroke-opacity': .85 });
for (const [x, y] of [[115, 1059], [167, 1045], [275, 1010], [419, 997], [476, 1018], [527, 1062], [700, 1045], [794, 1006], [902, 1152], [1003, 1035], [1075, 1069], [1190, 1018], [1277, 1033], [1385, 1004], [1565, 1001], [1803, 993], [1961, 1019], [2091, 996]]) dot(osc, x, y, 4, '#fafa52');
for (const [x, y] of [[73, 1153], [123, 1056], [209, 1133], [347, 1135], [440, 1006], [505, 1064], [620, 1157], [736, 1090], [895, 1149], [952, 1158], [1039, 1092], [1125, 1131], [1233, 1116], [1320, 1098], [1486, 1145], [1695, 1162], [1904, 1157], [2012, 1151], [2199, 1158]]) dot(osc, x, y, 4, '#e632f0');

const slow = document.getElementById('slow');
path(slow, 'M8 1228H2196', '#4a0d08', 5);
line(slow, parse('8,1243 45,1243 55,1239 310,1239 340,1236 620,1236 630,1234 908,1234 915,1232 1198,1232 1206,1231 1776,1231 1784,1230 2196,1229'), '#f03423', 2);
histogram(slow, 'y54Y20y16Y80O124r10', 1322);
path(slow, 'M8 1321H2196', '#a08282', 2, { 'stroke-dasharray': '10 12' });
path(slow, 'M8 1416H2196', '#234d10', 5);
path(slow, 'M8 1425H2196', '#460a48', 10);

path(main, 'M1428 82V945', '#9598a1', 2, { 'stroke-dasharray': '10 12' });
path(osc, 'M1428 947V1198', '#9598a1', 2, { 'stroke-dasharray': '10 12' });
path(slow, 'M1428 1200V1452', '#9598a1', 2, { 'stroke-dasharray': '10 12' });

/* ---------- value scales: [y, text, colour, kind] ---------- */
function scale(id, top, height, items) {
  const host = document.getElementById(id);
  for (const [y, text, color, kind] of items) {
    const d = document.createElement('div');
    d.className = 'tag ' + (kind || (color ? '' : 'tag-plain'));
    d.style.top = ((y - top) / height * 100).toFixed(2) + '%';
    if (color) { d.style.color = color; d.style.borderColor = color; }
    d.textContent = text;
    host.appendChild(d);
  }
}
scale('scale1', 82, 863, [[147, '64 500,0'], [259, '64 400,0'], [371, '64 300,0'], [461, '64 220,0'], [551, '64 140,0'], [704, '64 005,0'], [771, '63 945,0'], [839, '63 885,0'], [907, '63 825,0'],
  [481, '64 180,9', '#8cfa48'], [515, '64 173,7', '#f7cfcb'], [642, '64 060,7', '#f03423'], [676, '64 032,5', '#e92fb4'], [614, '64 085,7', '', 'tag-cross']]);
scale('scale2', 947, 251, [[972, '112,0', '#d04af0'], [1006, '102,0', '#d04af0'], [1040, '83,4', '#ffffff'], [1074, '16,0', '#ee7430'], [1108, '−8,0', '#d04af0'], [1156, '−89,9', '#f03423'], [1190, '−89,9', '#e632f0']]);
scale('scale3', 1200, 252, [[1230, '95,4', '#f03423'], [1311, '8,0', '#df484d'], [1345, '−24,0', '#d04af0'], [1386, '−72,1', '#e632f0'], [1420, '−102,0', '#d04af0'], [1454, '−112,0', '#d04af0']]);
</script>
</body>
</html>
